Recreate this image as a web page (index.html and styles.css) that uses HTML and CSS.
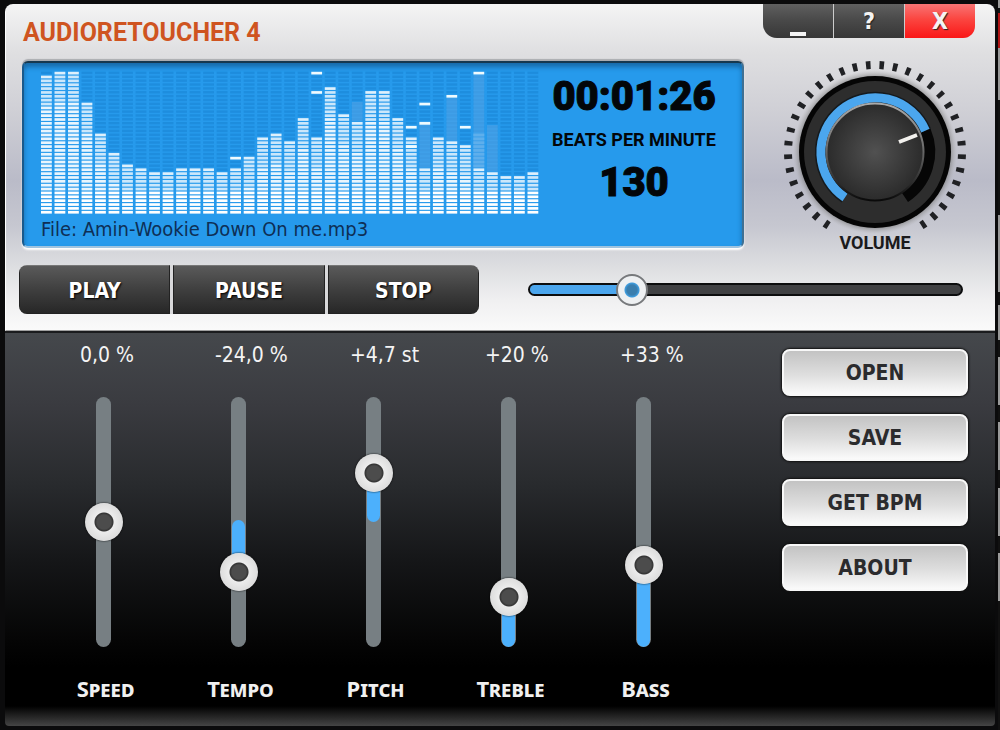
FILE: index.html
```html
<!DOCTYPE html>
<html lang="en">
<head>
<meta charset="utf-8">
<title>AudioRetoucher 4</title>
<link rel="stylesheet" href="styles.css">
</head>
<body>
<main class="window">
  <section class="deck">
    <header class="titlebar">
      <h1 class="title">AUDIORETOUCHER 4</h1>
      <div class="window-buttons">
        <button class="window-button" type="button" aria-label="Minimize"><svg width="16" height="4" viewBox="0 0 16 4"><rect width="16" height="4" fill="#f4f4f4"/></svg></button>
        <button class="window-button help" type="button">?</button>
        <button class="window-button close" type="button">X</button>
      </div>
    </header>

    <div class="main-row">
      <div class="lcd">
        <div class="lcd-left">
          <svg class="spectrum" id="spectrum" viewBox="0 0 370 370" preserveAspectRatio="none" role="img" aria-label="Spectrum"></svg>
          <div class="file">File: Amin-Wookie Down On me.mp3</div>
        </div>
        <div class="lcd-right">
          <div class="time">00:01:26</div>
          <div class="bpm-label">BEATS PER MINUTE</div>
          <div class="bpm">130</div>
        </div>
      </div>

      <div class="volume">
        <div class="knob">
          <svg class="knob-art" viewBox="-92 -92 184 184" aria-hidden="true">
            <defs>
              <radialGradient id="cap"><stop offset="0" stop-color="#515151"/><stop offset="1" stop-color="#2b2b2b"/></radialGradient>
              <radialGradient id="halo"><stop offset="0.9" stop-color="#666" stop-opacity="0.75"/><stop offset="1" stop-color="#aaa" stop-opacity="0"/></radialGradient>
              <linearGradient id="rim" x1="0" y1="0" x2="0" y2="1"><stop offset="0" stop-color="#aaa"/><stop offset="0.5" stop-color="#666"/><stop offset="1" stop-color="#0a0a0a"/></linearGradient>
            </defs>
            <path d="M-46.4 73.6A87 87 0 1 1 46.4 73.6" fill="none" stroke="#202124" stroke-width="8" pathLength="33.34" stroke-dasharray="0.34 0.66"/>
            <circle r="82" fill="url(#halo)"/>
            <circle r="76" fill="#050505"/>
            <circle r="71" fill="#2d2d2d"/>
            <path d="M50.4 -21.4A54.5 54.5 0 0 1 30 45.5" fill="none" stroke="#060606" stroke-width="11"/>
            <path d="M-30 45.5A54.5 54.5 0 1 1 50.4 -21.4" fill="none" stroke="#151a1e" stroke-width="12"/>
            <path d="M-30 45.5A54.5 54.5 0 1 1 50.4 -21.4" fill="none" stroke="#4ba6ee" stroke-width="9"/>
            <circle r="48.5" fill="url(#cap)" stroke="url(#rim)" stroke-width="2"/>
            <path d="M24 -10L42 -17" stroke="#f3f1ee" stroke-width="4"/>
          </svg>
          <input class="knob-input" id="volume" type="range" min="0" max="100" value="70">
        </div>
        <label class="volume-label" for="volume">VOLUME</label>
      </div>
    </div>

    <div class="transport">
      <div class="transport-buttons">
        <button class="transport-button" type="button">PLAY</button>
        <button class="transport-button" type="button">PAUSE</button>
        <button class="transport-button" type="button">STOP</button>
      </div>
      <div class="seek">
        <div class="seek-rail"><div class="seek-fill" style="width:24%"></div></div>
        <input class="seek-input" type="range" min="0" max="100" value="24" aria-label="Position">
      </div>
    </div>
  </section>

  <section class="mixer">
    <div class="channels">
      <div class="channel">
        <output class="value" for="speed">0,0 %</output>
        <div class="fader"><div class="rail"></div>
          <input class="fader-input" id="speed" type="range" min="-60" max="60" value="0"></div>
        <label class="name" for="speed">Speed</label>
      </div>
      <div class="channel">
        <output class="value" for="tempo">-24,0 %</output>
        <div class="fader"><div class="rail"><div class="fill" style="top:49%;height:21%"></div></div>
          <input class="fader-input" id="tempo" type="range" min="-60" max="60" value="-24"></div>
        <label class="name" for="tempo">Tempo</label>
      </div>
      <div class="channel">
        <output class="value" for="pitch">+4,7 st</output>
        <div class="fader"><div class="rail"><div class="fill" style="top:30%;height:20%"></div></div>
          <input class="fader-input" id="pitch" type="range" min="-12" max="12" step="0.1" value="4.7"></div>
        <label class="name" for="pitch">Pitch</label>
      </div>
      <div class="channel">
        <output class="value" for="treble">+20 %</output>
        <div class="fader"><div class="rail"><div class="fill" style="top:80%;height:20%"></div></div>
          <input class="fader-input" id="treble" type="range" min="0" max="100" value="20"></div>
        <label class="name" for="treble">Treble</label>
      </div>
      <div class="channel">
        <output class="value" for="bass">+33 %</output>
        <div class="fader"><div class="rail"><div class="fill" style="top:67%;height:33%"></div></div>
          <input class="fader-input" id="bass" type="range" min="0" max="100" value="33"></div>
        <label class="name" for="bass">Bass</label>
      </div>
    </div>
    <nav class="actions">
      <button class="action" type="button">OPEN</button>
      <button class="action" type="button">SAVE</button>
      <button class="action" type="button">GET BPM</button>
      <button class="action" type="button">ABOUT</button>
    </nav>
  </section>
</main>
<script src="spectrum.js"></script>
</body>
</html>
```
FILE: styles.css
```css
* { box-sizing: border-box; }

body {
  margin: 0;
  min-height: 100vh;
  display: flex;
  padding: 4px 5px 4px;
  background:
    linear-gradient(#999 8px, #111 8px 13px, #b01515 13px 48px, #999 48px 100px, #111 100px 215px,
      #999 215px 292px, #111 292px 305px, #999 305px 340px, #111 340px 357px, #999 357px 405px,
      #111 405px 422px, #999 422px 470px, #111 470px 488px, #999 488px 536px, #111 536px 553px,
      #999 553px 601px, #111 601px) right top / 2px 100% no-repeat,
    #0b0b0c;
  font-family: "DejaVu Sans Condensed", "DejaVu Sans", sans-serif;
}

button { border: 0; padding: 0; font-family: inherit; cursor: pointer; }
input[type="range"] { appearance: none; margin: 0; background: transparent; }

.window {
  flex: 1;
  display: flex;
  flex-direction: column;
  border-radius: 8px 8px 4px 4px;
  overflow: hidden;
}

.deck {
  padding-bottom: 16px;
  background: linear-gradient(#f4f4f4, #dfdfe1 15%, #d0d0d6 32%, #babbc8 54%, #c6c7d0 68%, #dcdde0 80%, #f0f0f1 91%, #fafafa);
  border-left: 1px solid #fff;
  border-bottom: 1px solid #a0a0a0;
}

.titlebar { display: flex; justify-content: space-between; align-items: flex-start; height: 56px; padding: 0 20px 0 17px; }
.title {
  margin: 12px 0 0;
  font: 700 25px/34px Roboto, "Liberation Sans", sans-serif;
  color: #cf5420;
}
.window-buttons { display: flex; gap: 1px; border-radius: 0 0 12px 14px; overflow: hidden; background: #ccc; }
.window-button {
  width: 70px; height: 34px;
  background: linear-gradient(#606060, #4a4a4a 45%, #373737);
  color: #f4f4f4;
  font-size: 23px; font-weight: bold; line-height: 34px;
  text-shadow: 1px 1px 1px #222;
}
.window-button svg { vertical-align: -7px; }
.close { background: linear-gradient(#f87474, #fb4540 45%, #fa1717); }

.main-row { display: flex; gap: 39px; padding: 0 28px 0 16px; }
.lcd {
  flex: 1;
  display: flex;
  height: 187px;
  margin-top: 1px;
  padding: 8px 15px 4px 17px;
  background: #269aec;
  border: 2px solid #1d3a52;
  border-color: #16384f #3f7093 #9fc3df #1a5a8c;
  border-radius: 6px;
  box-shadow: inset 0 4px 5px #176aa8, 0 2px 2px #fff, 0 -2px 1px #aaacb0;
}
.lcd-left { flex: 1; min-width: 0; }
.spectrum { display: block; width: 100%; height: 143px; }
.file { padding-top: 2px; font-size: 20px; line-height: 26px; color: #0e2f55; white-space: nowrap; }
.lcd-right {
  width: 186px;
  padding-top: 2px;
  text-align: center;
  color: #030609;
  font-family: Roboto, "Liberation Sans", sans-serif;
  font-weight: 900;
  white-space: nowrap;
}
.time, .bpm { font-size: 40px; line-height: 48px; -webkit-text-stroke: 1px #030609; }
.bpm-label { font-size: 18px; font-weight: 700; line-height: 38px; }

.volume { width: 184px; display: flex; flex-direction: column; align-items: center; }
.knob { position: relative; width: 184px; height: 172px; }
.knob-art { display: block; width: 184px; height: 184px; }
.knob-input { position: absolute; inset: 0; width: 100%; height: 100%; opacity: 0; }
.volume-label { font: 700 18px/22px Roboto, "Liberation Sans", sans-serif; color: #1a1a1c; }

.transport { display: flex; align-items: center; gap: 33px; padding: 11px 16px 0 13px; }
.transport-buttons { display: flex; gap: 3px; width: 460px; border-radius: 8px; overflow: hidden; background: #d8d8da; }
.transport-button {
  flex: 1; height: 49px;
  padding-top: 2px;
  color: #fff;
  font-size: 21px; font-weight: bold;
  background: linear-gradient(#5a5a5a, #3f3f3f 50%, #272727);
  border: 1px solid #222;
  border-top-color: #777;
  text-shadow: 1px 1px 2px #000;
}

.seek { flex: 1; display: grid; align-items: center; }
.seek-rail {
  grid-area: 1 / 1;
  margin: 0 16px;
  height: 13px;
  background: #404143;
  border: 2px solid #0c0d0e;
  border-radius: 7px;
  overflow: hidden;
}
.seek-fill { height: 100%; background: #4ba6ee; }
.seek-input { grid-area: 1 / 1; width: 100%; height: 34px; }
.seek-input::-webkit-slider-thumb {
  appearance: none;
  width: 32px; height: 32px;
  border-radius: 50%;
  border: 2px solid #77797c;
  background: radial-gradient(circle, #3a7eae 0 5px, #3f9ddf 7px, #eef0f2 8px);
}

.mixer {
  flex: 1;
  display: flex;
  justify-content: space-between;
  padding: 8px 27px 0 31px;
  border-top: 2px solid #1b1c1e;
  background:
    linear-gradient(#000, #454545) bottom / 100% 20px no-repeat,
    linear-gradient(#45484c, #3a3b40 18%, #292b2e 38%, #151618 58%, #050505 78%, #000 85%);
}
.channels { display: flex; }
.channel { width: 135px; display: flex; flex-direction: column; align-items: center; }
.value {
  align-self: stretch;
  padding: 1px 0 0 44px;
  color: #f4f4f4;
  font-size: 21px; line-height: 26px;
  white-space: nowrap;
}
.fader { display: grid; justify-items: center; margin-top: 10px; }
.rail {
  grid-area: 1 / 1;
  position: relative;
  width: 15px; margin: 19px 0;
  background: #777f83;
  border-radius: 8px;
  overflow: hidden;
}
.fill { position: absolute; left: 1px; right: 1px; background: #4cb0fc; border-radius: 7px; }
.fader-input {
  grid-area: 1 / 1;
  z-index: 1;
  writing-mode: vertical-lr;
  direction: rtl;
  width: 38px; height: 288px;
}
.fader-input::-webkit-slider-thumb {
  appearance: none;
  width: 38px; height: 38px;
  border-radius: 50%;
  background: radial-gradient(circle, #4c4c4c 0 7px, #333 9px, #ececec 10px, #dedede 18px);
  box-shadow: 0 0 2px #000;
}
.name {
  margin-top: 8px;
  padding-left: 4px;
  font: 700 22px/28px "Noto Sans", sans-serif;
  font-variant-caps: small-caps;
  color: #f0f0f0;
}

.actions { width: 186px; display: flex; flex-direction: column; gap: 18px; padding-top: 8px; }
.action {
  height: 47px;
  flex: none;
  border: 2px solid #f8f8f8;
  border-radius: 8px;
  background: linear-gradient(#c3c3c3, #dedede 55%, #fafafa);
  box-shadow: 0 0 2px 1px #111;
  color: #2b2b2d;
  font-size: 21px; font-weight: bold;
}
```
FILE: spectrum.js
```js
// One entry per band: lit rows, out of 37.
const levels = [36, 37, 37, 29, 21, 16, 13, 12, 11, 11, 12, 12, 12, 11, 12, 15, 20, 21, 19,
  25, 20, 33, 26, 24, 32, 32, 25, 20, 12, 20, 19, 18, 12, 11, 10, 10, 11];
// Peak markers per band, as row numbers.
const peaks = { 14: [15], 20: [37, 32], 27: [23, 18], 28: [29, 24], 30: [31], 31: [23], 32: [37] };
// Fading trails: band to top row.
const trails = { 23: 29, 28: 24, 30: 30, 32: 36, 33: 23 };
// Bands whose upper rows are half lit, by row of the top.
const afterglow = { 32: 21 };
const ROWS = 37;
const svg = document.getElementById('spectrum');

function rect(x, y, height, fill, opacity) {
  const el = document.createElementNS('http://www.w3.org/2000/svg', 'rect');
  el.setAttribute('x', x);
  el.setAttribute('y', y);
  el.setAttribute('width', 8);
  el.setAttribute('height', height);
  el.setAttribute('fill', fill);
  el.setAttribute('opacity', opacity);
  svg.append(el);
}

levels.forEach((level, band) => {
  const x = band * 10;
  for (let row = 1; row <= ROWS; row++) {
    const y = (ROWS - row) * 10 + 2;
    if (row <= level) {
      const depth = level - row;
      const opacity = row < 7 ? 1 : depth === 0 ? 0.85 : depth < 8 ? 0.76 : 0.9;
      rect(x, y, 7, '#fff', opacity);
    } else if (row <= (afterglow[band] || 0)) {
      rect(x, y, 7, '#fff', 0.35);
    } else {
      rect(x, y, 6, '#1680d0', 0.5);
    }
  }
  if (trails[band]) {
    rect(x, (ROWS - trails[band]) * 10, (trails[band] - level) * 10, '#52a5e8', 0.6);
  }
  (peaks[band] || []).forEach((row) => rect(x, (ROWS - row) * 10 + 2, 7, '#f0fbff', 1));
});
```
